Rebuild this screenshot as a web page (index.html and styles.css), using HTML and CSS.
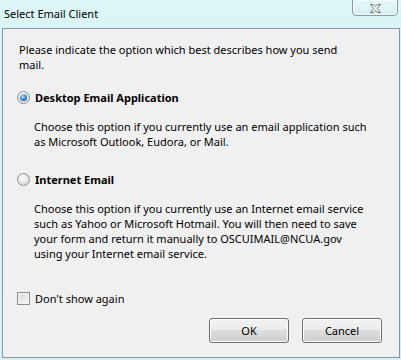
FILE: index.html
```html
<!DOCTYPE html>
<html lang="en">
<head>
    <meta charset="UTF-8">
    <title>Select Email Client</title>
    <link rel="stylesheet" href="styles.css">
</head>
<body>
    <div class="window">
        <div class="titlebar">
            <span class="title">Select Email Client</span>
            <button class="close-button" title="Close">
                <svg width="13" height="11" viewBox="0 0 13 11">
                    <path d="M1.5 1.5h3l2 2.2 2-2.2h3l-3.4 4 3.4 4h-3l-2-2.2-2 2.2h-3l3.4-4z" fill="#fdfdfd" stroke="#6b7378" stroke-width="1" stroke-linejoin="round"/>
                </svg>
            </button>
        </div>

        <div class="panel">
            <p class="intro">Please indicate the option which best describes how you send<br>mail.</p>

            <div class="option">
                <label class="option-label">
                    <span class="radio checked"></span>
                    Desktop Email Application
                </label>
                <p class="option-desc">Choose this option if you currently use an email application such<br>as Microsoft Outlook, Eudora, or Mail.</p>
            </div>

            <div class="option">
                <label class="option-label">
                    <span class="radio"></span>
                    Internet Email
                </label>
                <p class="option-desc">Choose this option if you currently use an Internet email service<br>such as Yahoo or Microsoft Hotmail. You will then need to save<br>your form and return it manually to OSCUIMAIL@NCUA.gov<br>using your Internet email service.</p>
            </div>

            <label class="dont-show">
                <span class="checkbox"></span>
                Don't show again
            </label>

            <div class="actions">
                <button class="dialog-button">OK</button>
                <button class="dialog-button">Cancel</button>
            </div>
        </div>
    </div>
</body>
</html>
```

FILE: styles.css
```css
* {
    margin: 0;
    padding: 0;
    box-sizing: border-box;
}

body {
    font-family: 'Noto Sans', 'Open Sans', sans-serif;
    font-size: 11px;
    color: #000;
    background: #dbf3f6;
}

.window {
    width: 401px;
    height: 360px;
    display: flex;
    flex-direction: column;
    background: linear-gradient(180deg, #dcf5f7 0%, #d5f1f4 100%);
}

/* title bar */
.titlebar {
    height: 28px;
    display: flex;
    align-items: flex-start;
    justify-content: space-between;
    padding-left: 4px;
}

.title {
    font-size: 11px;
    line-height: 15px;
    margin-top: 6px;
}

.close-button {
    width: 46px;
    height: 17px;
    margin-right: 3px;
    margin-top: -1px;
    border: 1px solid #8d9ca1;
    border-radius: 0 0 4px 4px;
    background: linear-gradient(180deg, #e6f7f8 0%, #dff4f6 50%, #d3eef1 100%);
    box-shadow: inset 0 0 0 1px rgba(255, 255, 255, 0.6);
    display: flex;
    align-items: center;
    justify-content: center;
    padding-top: 1px;
}

/* content panel */
.panel {
    flex: 1;
    margin: 0 1px 2px 2px;
    border: 1px solid #8a979d;
    background: #f0f0f0;
    padding: 13px 17px 0 16px;
    display: flex;
    flex-direction: column;
}

.intro {
    line-height: 15px;
}

.option {
    margin-top: 18px;
}

.option + .option {
    margin-top: 23px;
}

.option-label {
    display: flex;
    align-items: center;
    gap: 5px;
    font-weight: 700;
    line-height: 15px;
    margin-left: -2px;
}

.option-desc {
    margin-top: 14px;
    margin-left: 15px;
    line-height: 15px;
}

.radio {
    width: 13px;
    height: 13px;
    border-radius: 50%;
    border: 1px solid #8e8f8f;
    background: radial-gradient(circle at 40% 35%, #fdfdfd 0%, #e4e4e4 55%, #cfcfcf 100%);
    display: flex;
    align-items: center;
    justify-content: center;
    flex-shrink: 0;
}

.radio.checked::after {
    content: '';
    width: 7px;
    height: 7px;
    border-radius: 50%;
    background: radial-gradient(circle at 40% 35%, #b9e7ff 0%, #2d7fc0 55%, #0d4f8b 100%);
}

.dont-show {
    display: flex;
    align-items: center;
    gap: 5px;
    line-height: 15px;
    margin-top: 30px;
    margin-left: -2px;
}

.checkbox {
    width: 13px;
    height: 13px;
    border: 1px solid #8e8f8f;
    background: linear-gradient(135deg, #dcdcdc 0%, #f6f6f6 100%);
    box-shadow: inset 0 0 0 1px #f4f4f4;
    flex-shrink: 0;
}

.actions {
    display: flex;
    justify-content: flex-end;
    gap: 13px;
    margin-top: 12px;
}

.dialog-button {
    width: 80px;
    height: 25px;
    font-family: inherit;
    font-size: 11px;
    color: #000;
    border: 1px solid #707070;
    border-radius: 3px;
    background: linear-gradient(180deg, #f2f2f2 0%, #ebebeb 49%, #dddddd 50%, #cfcfcf 100%);
    box-shadow: inset 0 0 0 1px #fcfcfc;
}
```
